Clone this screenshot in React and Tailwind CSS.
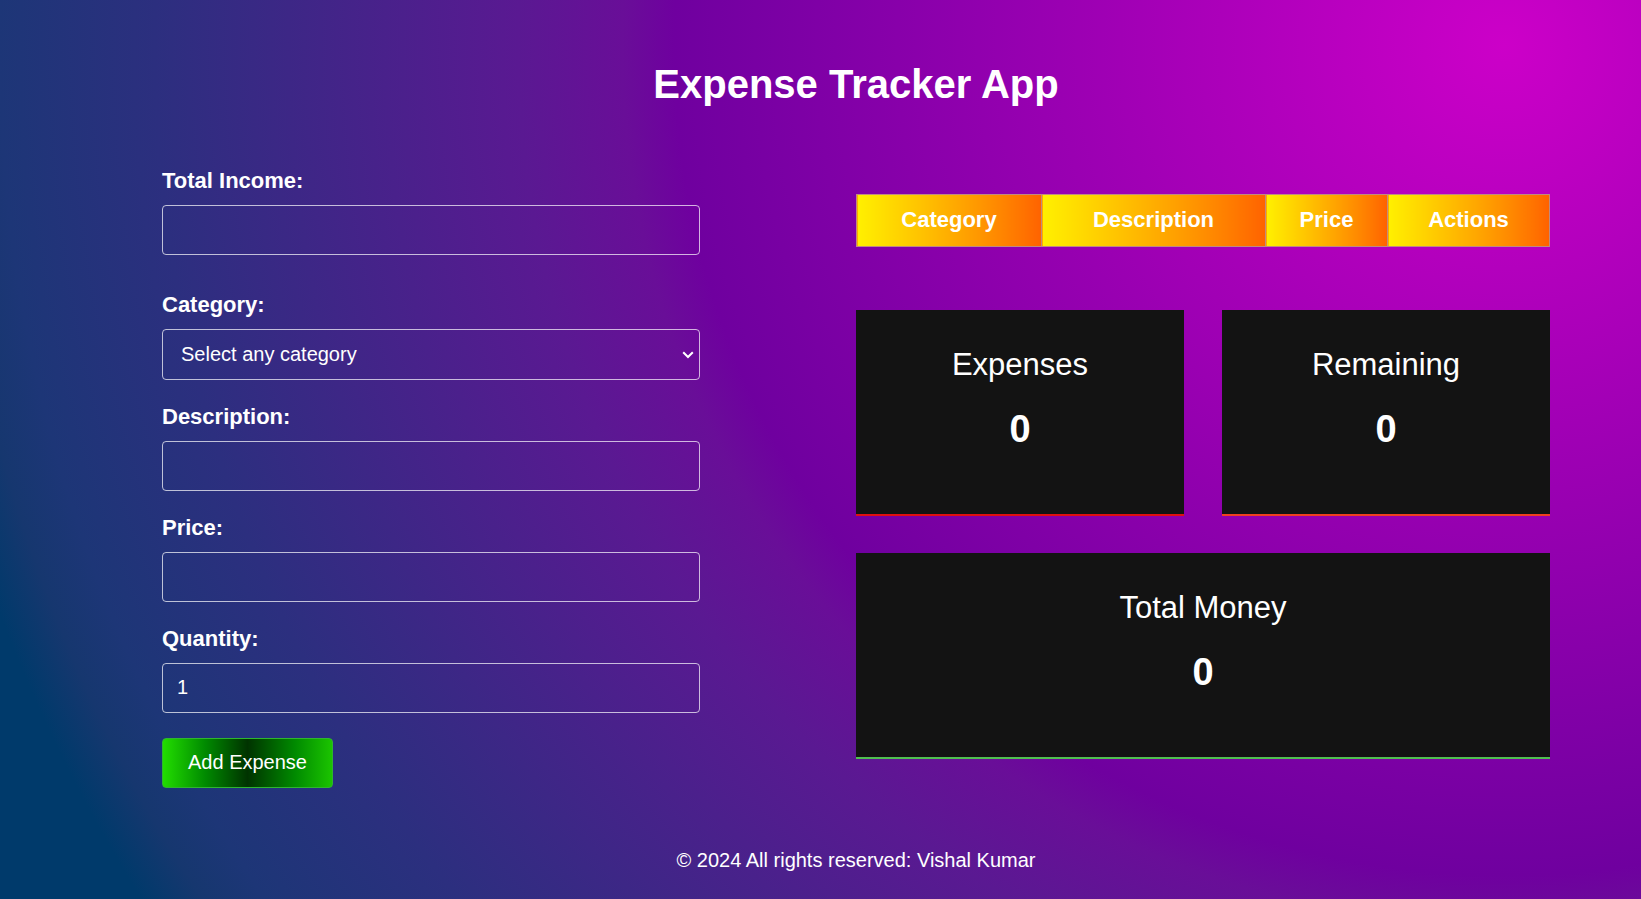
import { useState } from "react";

const CONTROL =
  "block h-[50px] w-full rounded-[4px] border border-white/70 bg-transparent px-[14px] pb-[2px] text-xl text-white outline-none";

function Field({ id, label, className, children }) {
  return (
    <div className={className}>
      <label htmlFor={id} className="mb-2 block text-[22px] leading-8 font-bold">
        {label}
      </label>
      {children}
    </div>
  );
}

function Card({ title, value, className }) {
  return (
    <section className={`border-b-2 bg-[#131313] pt-[33px] pb-[61px] text-center ${className}`}>
      <h2 className="text-[31px] leading-[44px]">{title}</h2>
      <p className="mt-[18px] text-[38px] leading-[48px] font-bold">{value}</p>
    </section>
  );
}

const COLUMNS = [
  { name: "Category", width: "w-[185px]" },
  { name: "Description", width: "w-[224px]" },
  { name: "Price", width: "w-[122px]" },
  { name: "Actions", width: "w-auto" },
];

export default function App() {
  const [quantity, setQuantity] = useState("1");

  return (
    <div className="min-h-screen bg-[radial-gradient(circle_farthest-corner_at_91.7%_5%,#cc00c8_0%,#6f009f_48%,#690e98_51%,#5a1992_57%,#2c2f7f_78%,#1d3677_87%,#16376f_90%,#003a6b_93%)] pt-[60px] pr-[91px] pb-[27px] pl-[162px] font-['Liberation_Sans',Arial,sans-serif] text-white">
      <h1 className="text-center text-[40px] leading-[48px] font-bold">Expense Tracker App</h1>

      <main className="mt-[57px] grid grid-cols-[538fr_694fr] items-start gap-x-[156px]">
        <form onSubmit={(e) => e.preventDefault()}>
          <Field id="income" label="Total Income:">
            <input id="income" type="number" className={CONTROL} />
          </Field>
          <Field id="category" label="Category:" className="mt-[34px]">
            <div className="relative">
              <select
                id="category"
                className="block h-[51px] w-full appearance-none rounded-[4px] border border-white/70 bg-transparent px-[18px] pb-[2px] text-xl text-white outline-none"
              >
                <option className="text-black">Select any category</option>
              </select>
              <svg
                viewBox="0 0 12 8"
                className="pointer-events-none absolute top-[22px] right-[6px] h-2 w-3"
                fill="none"
                stroke="currentColor"
                strokeWidth="2"
                aria-hidden="true"
              >
                <path d="M1.2 1.2 6 6 10.8 1.2" />
              </svg>
            </div>
          </Field>
          <Field id="description" label="Description:" className="mt-[21px]">
            <input id="description" type="text" className={CONTROL} />
          </Field>
          <Field id="price" label="Price:" className="mt-[21px]">
            <input id="price" type="number" className={CONTROL} />
          </Field>
          <Field id="quantity" label="Quantity:" className="mt-[21px]">
            <input
              id="quantity"
              type="number"
              value={quantity}
              onChange={(e) => setQuantity(e.target.value)}
              className={CONTROL}
            />
          </Field>
          <button
            type="submit"
            className="mt-[25px] h-[50px] rounded-[4px] border border-[#2fb52f] bg-[linear-gradient(90deg,#22dd00_0%,#008a00_25%,#003300_50%,#008a00_78%,#1bc400_100%)] px-[25px] pb-[2px] text-xl"
          >
            Add Expense
          </button>
        </form>

        <div className="pt-[29px]">
          <table className="w-full table-fixed border-collapse">
            <thead>
              <tr>
                {COLUMNS.map((column) => (
                  <th
                    key={column.name}
                    scope="col"
                    className={`h-[52px] border border-[#c08a80] bg-linear-to-r from-[#fff000] to-[#ff6200] pb-[2px] text-[22px] leading-8 font-bold ${column.width}`}
                  >
                    {column.name}
                  </th>
                ))}
              </tr>
            </thead>
          </table>

          <div className="mt-[63px] grid grid-cols-2 gap-x-[38px] gap-y-[37px]">
            <Card title="Expenses" value="0" className="border-[#e01010]" />
            <Card title="Remaining" value="0" className="border-[#f04020]" />
            <Card title="Total Money" value="0" className="col-span-2 border-[#50c050]" />
          </div>
        </div>
      </main>

      <footer className="mt-[60px] text-center text-xl leading-6">
        © 2024 All rights reserved: Vishal Kumar
      </footer>
    </div>
  );
}
